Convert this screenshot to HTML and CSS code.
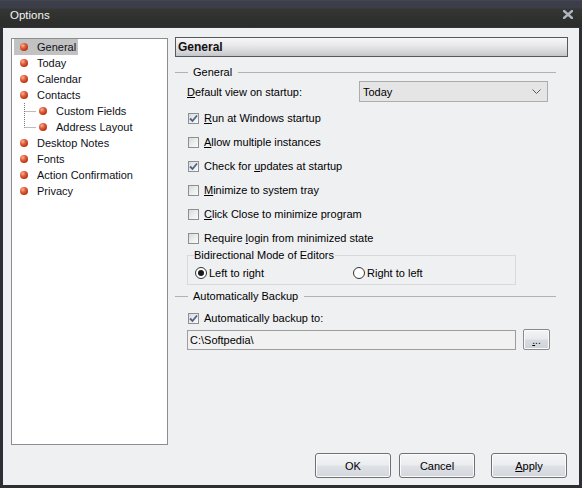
FILE: index.html
```html
<!DOCTYPE html>
<html>
<head>
<meta charset="utf-8">
<link rel="stylesheet" href="styles.css">
</head>
<body>
<div class="window">
  <div class="titlebar">
    <span class="title">Options</span>
    <svg class="close" width="10" height="9" viewBox="0 0 10 9"><path d="M1 1 L9 8 M9 1 L1 8" stroke="#aeb6be" stroke-width="2.4" stroke-linecap="square" fill="none"/></svg>
  </div>
  <div class="client">
    <div class="main">
      <div class="tree">
        <div class="item sel"><span class="ball"></span><span class="txt">General</span></div>
        <div class="item"><span class="ball"></span><span class="txt">Today</span></div>
        <div class="item"><span class="ball"></span><span class="txt">Calendar</span></div>
        <div class="item"><span class="ball"></span><span class="txt">Contacts</span></div>
        <div class="item child"><svg class="conn" width="16" height="16" viewBox="0 0 16 16"><path d="M4.5 0 V16 M4.5 8.5 H16" stroke="#7a7a7a" stroke-width="1" stroke-dasharray="1 1" fill="none"/></svg><span class="ball"></span><span class="txt">Custom Fields</span></div>
        <div class="item child"><svg class="conn" width="16" height="16" viewBox="0 0 16 16"><path d="M4.5 0 V8.5 M4.5 8.5 H16" stroke="#7a7a7a" stroke-width="1" stroke-dasharray="1 1" fill="none"/></svg><span class="ball"></span><span class="txt">Address Layout</span></div>
        <div class="item"><span class="ball"></span><span class="txt">Desktop Notes</span></div>
        <div class="item"><span class="ball"></span><span class="txt">Fonts</span></div>
        <div class="item"><span class="ball"></span><span class="txt">Action Confirmation</span></div>
        <div class="item"><span class="ball"></span><span class="txt">Privacy</span></div>
      </div>
      <div class="pane">
        <div class="pane-head">General</div>
        <div class="group-title"><span class="gl-left"></span><span class="gl-text">General</span><span class="gl-right"></span></div>
        <div class="combo-row">
          <span><u>D</u>efault view on startup:</span>
          <div class="combo"><span>Today</span><svg width="9" height="6" viewBox="0 0 9 6"><path d="M0.5 0.5 L4.5 4.5 L8.5 0.5" stroke="#5a5a5a" stroke-width="1" fill="none"/></svg></div>
        </div>
        <div class="cb-row first"><span class="cb"><svg width="9" height="9" viewBox="0 0 9 9"><path d="M1 4.5 L3.5 7 L8 1.5" stroke="#4d6185" stroke-width="1.8" fill="none"/></svg></span><span><u>R</u>un at Windows startup</span></div>
        <div class="cb-row"><span class="cb"></span><span><u>A</u>llow multiple instances</span></div>
        <div class="cb-row"><span class="cb"><svg width="9" height="9" viewBox="0 0 9 9"><path d="M1 4.5 L3.5 7 L8 1.5" stroke="#4d6185" stroke-width="1.8" fill="none"/></svg></span><span>Check for <u>u</u>pdates at startup</span></div>
        <div class="cb-row"><span class="cb"></span><span><u>M</u>inimize to system tray</span></div>
        <div class="cb-row"><span class="cb"></span><span><u>C</u>lick Close to minimize program</span></div>
        <div class="cb-row"><span class="cb"></span><span>Require <u>l</u>ogin from minimized state</span></div>
        <div class="bidi">
          <div class="bidi-label">Bidirectional Mode of Editors</div>
          <div class="radio-row">
            <div class="radio-opt wide"><span class="radio on"></span><span>Left to right</span></div>
            <div class="radio-opt"><span class="radio"></span><span>Right to left</span></div>
          </div>
        </div>
        <div class="group-title backup"><span class="gl-left"></span><span class="gl-text">Automatically Backup</span><span class="gl-right"></span></div>
        <div class="cb-row backup-cb"><span class="cb"><svg width="9" height="9" viewBox="0 0 9 9"><path d="M1 4.5 L3.5 7 L8 1.5" stroke="#4d6185" stroke-width="1.8" fill="none"/></svg></span><span>Automatically backup to:</span></div>
        <div class="path-row">
          <div class="path-input">C:\Softpedia\</div>
          <div class="browse"><span><u>.</u>..</span></div>
        </div>
      </div>
    </div>
    <div class="footer">
      <div class="btn">OK</div>
      <div class="btn">Cancel</div>
      <div class="btn apply"><u>A</u>pply</div>
    </div>
  </div>
</div>
</body>
</html>
```

FILE: styles.css
```css
html, body {
  margin: 0;
  padding: 0;
}
body {
  font-family: "Liberation Sans", Arial, sans-serif;
  font-size: 11px;
  color: #000;
  background: #2f3136;
}
.window {
  width: 582px;
  height: 488px;
  display: flex;
  flex-direction: column;
  background: #2d2f34;
  box-sizing: border-box;
}
.titlebar {
  height: 28px;
  flex: none;
  display: flex;
  align-items: center;
  justify-content: space-between;
  padding: 0 10px 0 10px;
  box-sizing: border-box;
  background: linear-gradient(#4a4d58 0, #3c3f4a 1px, #3b3e48 8px, #353735 9px, #2f312f 18px, #2b2c2b 27px, #3a3c44 28px);
}
.title {
  color: #f4f4f4;
  font-size: 11.5px;
  margin-top: 1px;
}
.close {
  margin-top: 0px;
  margin-right: -1px;
}
.client {
  flex: 1;
  margin: 0 3px 3px 3px;
  background: #eff0f2;
  display: flex;
  flex-direction: column;
  padding: 10px 0 0 8px;
  box-sizing: border-box;
}
.main {
  display: flex;
  align-items: flex-start;
}
.tree {
  width: 157px;
  height: 407px;
  box-sizing: border-box;
  border: 1px solid #8d8d8f;
  background: #fff;
  padding: 0 0 0 2px;
  color: #101020;
}
.item {
  height: 16px;
  display: flex;
  align-items: center;
  width: fit-content;
  padding-right: 2px;
}
.item.sel {
  background: #c2c2c2;
}
.ball {
  width: 8px;
  height: 8px;
  border-radius: 50%;
  margin-left: 6px;
  background: radial-gradient(circle at 35% 32%, #f6b59c 0, #e0603c 35%, #b8300f 75%, #8a2008 100%);
  flex: none;
}
.txt {
  margin-left: 9px;
}
.item.child .ball {
  margin-left: 3px;
}
.conn {
  margin-left: 6px;
  flex: none;
}
.pane {
  width: 393px;
  margin-left: 7px;
  margin-top: -1px;
}
.pane-head {
  height: 20px;
  box-sizing: border-box;
  border: 1px solid #55595e;
  background: linear-gradient(#f7f7f8 0, #e9e9eb 40%, #d3d4d7 80%, #c4c5c9 100%);
  font-weight: bold;
  font-size: 12px;
  padding-left: 2px;
  display: flex;
  align-items: center;
  color: #111;
}
.group-title {
  height: 16px;
  margin-top: 7px;
  display: flex;
  align-items: center;
  padding-right: 12px;
}
.gl-left {
  width: 13px;
  height: 1px;
  background: #b2b2b4;
  flex: none;
}
.gl-text {
  margin: 0 6px 0 5px;
}
.gl-right {
  flex: 1;
  height: 1px;
  background: #b2b2b4;
}
.combo-row {
  margin-top: 1px;
  height: 21px;
  display: flex;
  align-items: center;
  justify-content: space-between;
  padding: 0 20px 0 12px;
}
.combo {
  width: 189px;
  height: 21px;
  box-sizing: border-box;
  border: 1px solid #acacac;
  background: #e5e5e5;
  display: flex;
  align-items: center;
  justify-content: space-between;
  padding: 0 6px 0 3px;
}
.cb-row {
  height: 24px;
  display: flex;
  align-items: center;
  padding-left: 13px;
}
.cb-row.first {
  margin-top: 4px;
}
.cb {
  width: 11px;
  height: 11px;
  box-sizing: border-box;
  border: 1px solid #8e8f91;
  background: linear-gradient(135deg, #d8d9db 0, #eceded 50%, #fafafa 100%);
  margin-right: 5px;
  display: flex;
  align-items: center;
  justify-content: center;
  flex: none;
}
.cb svg {
  display: block;
}
.bidi {
  margin: 5px 0 0 12px;
  width: 329px;
  height: 30px;
  box-sizing: border-box;
  border: 1px solid #d9d9db;
}
.bidi-label {
  margin: -7px 0 0 6px;
  width: fit-content;
  line-height: 13px;
  background: #eff0f2;
  padding-right: 1px;
}
.radio-row {
  margin-top: 3px;
  height: 16px;
  display: flex;
  align-items: center;
  padding-left: 7px;
}
.radio-opt {
  display: flex;
  align-items: center;
}
.radio-opt.wide {
  width: 158px;
}
.radio {
  width: 12px;
  height: 12px;
  box-sizing: border-box;
  border-radius: 50%;
  border: 1px solid #333;
  background: #fff;
  margin-right: 2px;
  display: flex;
  align-items: center;
  justify-content: center;
  flex: none;
}
.radio.on::after {
  content: "";
  width: 6px;
  height: 6px;
  border-radius: 50%;
  background: #1a1a1a;
}
.group-title.backup {
  margin-top: 3px;
}
.backup-cb {
  margin-top: 2px;
}
.path-row {
  margin-top: -1px;
  height: 21px;
  display: flex;
  align-items: center;
  padding-left: 12px;
}
.path-input {
  width: 329px;
  height: 20px;
  box-sizing: border-box;
  border: 1px solid #9d9d9f;
  background: #f1f1f2;
  padding-left: 2px;
  display: flex;
  align-items: center;
}
.browse {
  width: 27px;
  height: 21px;
  box-sizing: border-box;
  margin-left: 7px;
  border: 1px solid #8a8a8c;
  border-radius: 2px;
  box-shadow: inset 0 0 0 1px #fbfbfc;
  background: linear-gradient(#f4f5f7 0, #e8eaee 45%, #d7dbe1 55%, #cdd2d9 100%);
  display: flex;
  align-items: flex-end;
  justify-content: center;
  line-height: 13px;
  padding-bottom: 2px;
  font-size: 10px;
}
.footer {
  margin-top: 8px;
  display: flex;
  justify-content: flex-end;
  padding-right: 12px;
}
.btn {
  width: 76px;
  height: 25px;
  box-sizing: border-box;
  border: 1px solid #707174;
  border-radius: 3px;
  box-shadow: inset 0 0 0 1px #fbfbfc;
  background: linear-gradient(#f4f5f7 0, #ebedf0 45%, #dde0e5 55%, #d3d7dd 100%);
  display: flex;
  align-items: center;
  justify-content: center;
  margin-left: 8px;
}
.btn.apply {
  margin-left: 16px;
}
```
